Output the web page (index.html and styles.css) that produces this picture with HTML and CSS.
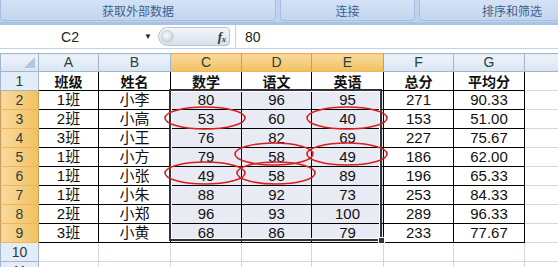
FILE: index.html
```html
<!DOCTYPE html>
<html>
<head>
<meta charset="utf-8">
<link rel="stylesheet" href="styles.css">
</head>
<body>
<div class="ribbon">
  <div class="group g1">获取外部数据</div>
  <div class="group g2">连接</div>
  <div class="group g3">排序和筛选</div>
</div>
<div class="fbar">
  <div class="namebox">C2</div>
  <div class="nbarrow">▼</div>
  <div class="slider"><span class="knob"></span><span class="fx">f<sub>x</sub></span></div>
  <div class="sep"></div>
  <div class="formula">80</div>
</div>
<div class="gap"></div>
<div class="sheet">
<table class="grid">
  <colgroup>
    <col style="width:38px"><col style="width:60px"><col style="width:72px"><col style="width:71px"><col style="width:70px"><col style="width:72px"><col style="width:70px"><col style="width:71px"><col style="width:34px">
  </colgroup>
  <tr class="hdr">
    <th class="corner"><span class="tri"></span></th><th>A</th><th>B</th><th class="sel">C</th><th class="sel">D</th><th class="sel">E</th><th>F</th><th>G</th><th></th>
  </tr>
  <tr>
    <th class="rn">1</th><td class="t b">班级</td><td class="t b">姓名</td><td class="t b">数学</td><td class="t b">语文</td><td class="t b">英语</td><td class="t b">总分</td><td class="t b">平均分</td><td></td>
  </tr>
  <tr><th class="rn sel">2</th><td class="t">1班</td><td class="t">小李</td><td class="t s">80</td><td class="t s">96</td><td class="t s">95</td><td class="t">271</td><td class="t">90.33</td><td></td></tr>
  <tr><th class="rn sel">3</th><td class="t">2班</td><td class="t">小高</td><td class="t s">53</td><td class="t s">60</td><td class="t s">40</td><td class="t">153</td><td class="t">51.00</td><td></td></tr>
  <tr><th class="rn sel">4</th><td class="t">3班</td><td class="t">小王</td><td class="t s">76</td><td class="t s">82</td><td class="t s">69</td><td class="t">227</td><td class="t">75.67</td><td></td></tr>
  <tr><th class="rn sel">5</th><td class="t">1班</td><td class="t">小方</td><td class="t s">79</td><td class="t s">58</td><td class="t s">49</td><td class="t">186</td><td class="t">62.00</td><td></td></tr>
  <tr><th class="rn sel">6</th><td class="t">1班</td><td class="t">小张</td><td class="t s">49</td><td class="t s">58</td><td class="t s">89</td><td class="t">196</td><td class="t">65.33</td><td></td></tr>
  <tr><th class="rn sel">7</th><td class="t">1班</td><td class="t">小朱</td><td class="t s">88</td><td class="t s">92</td><td class="t s">73</td><td class="t">253</td><td class="t">84.33</td><td></td></tr>
  <tr><th class="rn sel">8</th><td class="t">2班</td><td class="t">小郑</td><td class="t s">96</td><td class="t s">93</td><td class="t s">100</td><td class="t">289</td><td class="t">96.33</td><td></td></tr>
  <tr><th class="rn sel">9</th><td class="t">3班</td><td class="t">小黄</td><td class="t s">68</td><td class="t s">86</td><td class="t s">79</td><td class="t">233</td><td class="t">77.67</td><td></td></tr>
  <tr><th class="rn">10</th><td></td><td></td><td></td><td></td><td></td><td></td><td></td><td></td></tr>
  <tr><th class="rn">11</th><td></td><td></td><td></td><td></td><td></td><td></td><td></td><td></td></tr>
</table>
<div class="selection"><span class="handle"></span></div>
<svg class="marks" width="558" height="215" viewBox="0 52 558 215">
  <g fill="none" stroke="#d81e1e" stroke-width="1.6">
    <ellipse cx="205" cy="117" rx="40" ry="11"/>
    <ellipse cx="347" cy="117" rx="40" ry="11"/>
    <ellipse cx="274" cy="153" rx="39" ry="11"/>
    <ellipse cx="347" cy="153" rx="40" ry="11"/>
    <ellipse cx="205" cy="172" rx="40" ry="11"/>
    <ellipse cx="276" cy="172" rx="39" ry="11"/>
  </g>
</svg>
</div>
</body>
</html>
```

FILE: styles.css
```css
html, body {
  margin: 0;
  padding: 0;
  background: #ffffff;
  width: 558px;
  height: 267px;
  overflow: hidden;
}
body {
  font-family: "Liberation Sans", "Noto Sans CJK SC", sans-serif;
}
.ribbon {
  height: 22px;
  display: flex;
  gap: 4px;
  background: #bfd3ee;
  border-bottom: 3px solid #a9c3e6;
  overflow: hidden;
}
.group {
  flex: none;
  height: 21px;
  box-sizing: border-box;
  display: flex;
  align-items: center;
  justify-content: center;
  font-family: "Noto Sans CJK SC", sans-serif;
  font-size: 12px;
  color: #3f5f8c;
  background: linear-gradient(#d3e2f5, #c3d6f0);
  border: 1px solid #a6bfe0;
  border-top: none;
  border-radius: 0 0 4px 4px;
}
.g1 { width: 276px; }
.g2 { width: 135px; }
.g3 { width: 186px; }
.fbar {
  height: 23px;
  display: flex;
  align-items: center;
  border-bottom: 1px solid #c6d3e6;
  background: #ffffff;
}
.namebox {
  width: 140px;
  text-align: center;
  font-size: 14px;
  color: #222;
}
.nbarrow {
  width: 16px;
  font-size: 8px;
  color: #222;
  text-align: center;
}
.slider {
  margin-left: 2px;
  width: 72px;
  height: 19px;
  box-sizing: border-box;
  border-radius: 10px 4px 4px 10px;
  background: linear-gradient(#f4f7fb, #d7e1ee);
  border: 1px solid #b5c4d8;
  display: flex;
  align-items: center;
  justify-content: space-between;
  padding: 0 3px 0 2px;
}
.knob {
  width: 11px;
  height: 11px;
  border-radius: 50%;
  background: radial-gradient(circle at 40% 40%, #ffffff, #b4bfcc);
  border: 1px solid #c7d0dc;
}
.fx {
  font-family: "Liberation Serif", serif;
  font-style: italic;
  font-weight: bold;
  font-size: 13px;
  color: #333;
}
.fx sub { font-size: 8px; vertical-align: -1px; }
.sep {
  margin-left: 5px;
  width: 1px;
  height: 23px;
  background: #c6d3e6;
}
.formula {
  margin-left: 9px;
  font-size: 14px;
  color: #222;
}
.gap {
  height: 4px;
  background: #ffffff;
}
.sheet {
  position: relative;
}
.grid {
  border-collapse: collapse;
  table-layout: fixed;
  width: 558px;
}
.grid th, .grid td {
  padding: 0;
  height: 18px;
  border: 1px solid #d0d7e5;
  text-align: center;
  font-weight: normal;
  white-space: nowrap;
  overflow: hidden;
  line-height: 18px;
}
.hdr th {
  height: 17px;
  background: linear-gradient(#eef3fa, #dae5f3);
  border-color: #9eb6ce;
  color: #27413e;
  font-size: 14px;
  line-height: 17px;
}
.hdr th.sel {
  background: linear-gradient(#f9d99f, #f1c15f);
  border-color: #f2b45b #c9a059;
}
.corner { position: relative; }
.tri {
  position: absolute;
  right: 3px;
  bottom: 3px;
  width: 0;
  height: 0;
  border-left: 11px solid transparent;
  border-bottom: 11px solid #b4c7e0;
}
th.rn {
  background: #e4ecf7;
  border-color: #9eb6ce;
  color: #27413e;
  font-size: 14px;
}
th.rn.sel {
  background: linear-gradient(90deg, #f9d99f, #f1c15f);
  border-color: #f2b45b #c9a059;
}
td.t {
  border: 1px solid #000;
  font-size: 15px;
  color: #111;
  font-family: "Liberation Sans", "Noto Sans CJK SC", sans-serif;
}
td.b {
  font-family: "Noto Sans CJK SC", sans-serif;
  font-weight: bold;
  font-size: 14px;
}
td.s {
  background: #e8eaf4;
}
.selection {
  position: absolute;
  left: 169px;
  top: 36px;
  width: 213px;
  height: 152px;
  border: 2px solid #333;
  box-shadow: inset 0 0 0 1px #ffffff;
  box-sizing: border-box;
  pointer-events: none;
}
.handle {
  position: absolute;
  right: -5px;
  bottom: -5px;
  width: 5px;
  height: 5px;
  background: #333;
  border: 1px solid #fff;
}
.marks {
  position: absolute;
  left: 0;
  top: 0;
  pointer-events: none;
}
```
